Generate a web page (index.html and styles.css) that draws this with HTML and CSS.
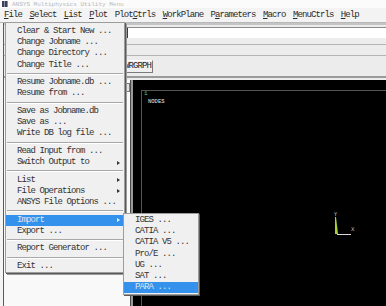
FILE: index.html
```html
<!DOCTYPE html>
<html lang="en">
<head>
    <meta charset="UTF-8">
    <title>ANSYS Multiphysics Utility Menu</title>
    <link rel="stylesheet" href="styles.css">
</head>
<body>
    <div class="app">
        <div class="titlebar">
            <span class="app-icon"></span>
            <span class="title-text">ANSYS Multiphysics Utility Menu</span>
        </div>

        <div class="menubar">
            <span class="mb-item"><u>F</u>ile</span>
            <span class="mb-item"><u>S</u>elect</span>
            <span class="mb-item"><u>L</u>ist</span>
            <span class="mb-item"><u>P</u>lot</span>
            <span class="mb-item">Plot<u>C</u>trls</span>
            <span class="mb-item"><u>W</u>orkPlane</span>
            <span class="mb-item">P<u>a</u>rameters</span>
            <span class="mb-item"><u>M</u>acro</span>
            <span class="mb-item"><u>M</u>enuCtrls</span>
            <span class="mb-item"><u>H</u>elp</span>
        </div>

        <div class="workspace">
            <div class="toolbar">
                <div class="cmd-row"><div class="cmd-input"></div></div>
                <div class="tool-row"></div>
                <div class="btn-row"><span class="tb-btn">POWRGRPH</span></div>
            </div>

            <div class="main">
                <div class="side">
                    <span class="side-btn"></span>
                </div>
                <div class="gfx">
                    <div class="gfx-frame">
                        <div class="win-no">1</div>
                        <div class="gfx-label">NODES</div>
                    </div>
                    <svg class="triad" width="26" height="30" viewBox="0 0 26 30">
                        <text x="4" y="8" class="axis-text">Y</text>
                        <polygon points="5,9 6,9 8,26 5,26" fill="#a8d23a"/>
                        <line x1="7" y1="26.5" x2="21" y2="26.5" stroke="#d8d8d8" stroke-width="1"/>
                        <text x="21" y="23" class="axis-text">X</text>
                    </svg>
                </div>
            </div>
        </div>

        <!-- File dropdown -->
        <div class="dropdown">
            <div class="dd-item">Clear &amp; Start New ...</div>
            <div class="dd-item">Change Jobname ...</div>
            <div class="dd-item">Change Directory ...</div>
            <div class="dd-item">Change Title ...</div>
            <div class="dd-sep"></div>
            <div class="dd-item">Resume Jobname.db ...</div>
            <div class="dd-item">Resume from ...</div>
            <div class="dd-sep"></div>
            <div class="dd-item">Save as Jobname.db</div>
            <div class="dd-item">Save as ...</div>
            <div class="dd-item">Write DB log file ...</div>
            <div class="dd-sep"></div>
            <div class="dd-item">Read Input from ...</div>
            <div class="dd-item has-sub">Switch Output to</div>
            <div class="dd-sep"></div>
            <div class="dd-item has-sub">List</div>
            <div class="dd-item has-sub">File Operations</div>
            <div class="dd-item">ANSYS File Options ...</div>
            <div class="dd-sep"></div>
            <div class="dd-item has-sub active">Import
                <div class="submenu">
                    <div class="sub-item">IGES ...</div>
                    <div class="sub-item">CATIA ...</div>
                    <div class="sub-item">CATIA V5 ...</div>
                    <div class="sub-item">Pro/E ...</div>
                    <div class="sub-item">UG ...</div>
                    <div class="sub-item">SAT ...</div>
                    <div class="sub-item active">PARA ...</div>
                </div>
            </div>
            <div class="dd-item">Export ...</div>
            <div class="dd-sep"></div>
            <div class="dd-item">Report Generator ...</div>
            <div class="dd-sep"></div>
            <div class="dd-item">Exit ...</div>
        </div>
    </div>
</body>
</html>
```

FILE: styles.css
```css
body {
    margin: 0;
    width: 386px;
    height: 306px;
    overflow: hidden;
    background: #f4f4f4;
    font-family: "Liberation Mono", "Courier New", monospace;
    font-size: 9px;
    letter-spacing: -0.9px;
    color: #333;
}
.app {
    position: relative;
    width: 386px;
    height: 306px;
}
.titlebar {
    height: 8px;
    display: flex;
    align-items: center;
    overflow: hidden;
    background: #fbfbfb;
}
.app-icon {
    width: 6px;
    height: 6px;
    margin: 0 4px 0 2px;
    background: repeating-linear-gradient(90deg, #3a3f5a 0 2px, #8a8fa5 2px 3px);
}
.title-text {
    color: #b8b8b8;
    font-size: 6px;
    line-height: 7px;
    letter-spacing: 0;
}
.menubar {
    height: 14px;
    display: flex;
    align-items: center;
    padding-left: 4px;
    background: #f3f3f3;
    border-bottom: 1px solid #b8b8b8;
}
.mb-item {
    margin-right: 7.4px;
    color: #2a2a2a;
}
.workspace {
    margin-left: 3px;
    border-left: 1px solid #5a5a5a;
}
.toolbar {
    background: #ececec;
}
.cmd-row {
    height: 19px;
    border-top: 2px solid #c4c4c4;
}
.cmd-input {
    margin: 2px 0 0 122px;
    height: 10px;
    background: #fff;
    border-left: 2px solid #3c3c3c;
    border-top: 1px solid #8a8a8a;
}
.tool-row {
    height: 10px;
    border-top: 1px solid #b4b4b4;
}
.btn-row {
    height: 23px;
    border-top: 1px solid #b4b4b4;
    border-bottom: 2px solid #9a9a9a;
    padding-top: 4px;
    box-sizing: border-box;
    display: flex;
}
.tb-btn {
    margin-left: 109px;
    height: 11px;
    line-height: 11px;
    padding: 0 1px;
    border: 1px solid #7a7a7a;
    border-top-color: #fff;
    border-left-color: #fff;
    background: #efefef;
    color: #222;
}
.main {
    display: flex;
    height: 226px;
    padding-top: 2px;
    background: #ececec;
}
.side {
    width: 126px;
    background: #f9f9f9;
    border-right: 1px solid #4a4a4a;
    display: flex;
    justify-content: flex-end;
}
.side-btn {
    width: 5px;
    height: 7px;
    margin-top: 3px;
    border: 1px solid #777;
    background: #e4e4e4;
}
.gfx {
    position: relative;
    flex: 1;
    background: #000;
    border-left: 2px solid #9a9a9a;
    overflow: hidden;
}
.gfx-frame {
    margin: 10px 0 0 8px;
    height: 400px;
    border-left: 1px solid #555;
    border-top: 1px solid #555;
    letter-spacing: 0;
}
.win-no {
    color: #4cc0a8;
    font-size: 6px;
    line-height: 6px;
    padding-left: 2px;
}
.gfx-label {
    color: #e8e8e8;
    font-size: 5.5px;
    line-height: 6px;
    margin: 2px 0 0 6px;
}
.triad {
    position: absolute;
    left: 197px;
    top: 128px;
}
.axis-text {
    font-family: "DejaVu Sans", sans-serif;
    font-size: 5px;
    fill: #c8c8c8;
}
.dropdown {
    position: absolute;
    left: 5px;
    top: 22px;
    width: 118px;
    padding: 3px 0 0;
    background: #f0f0f0;
    border: 1px solid #9c9c9c;
    box-shadow: 1px 1px 0 #5a5a5a, 2px 2px 0 #9a9a9a;
}
.dd-item {
    position: relative;
    height: 11.2px;
    line-height: 11.2px;
    padding-left: 11px;
    white-space: nowrap;
}
.has-sub::after {
    content: "";
    position: absolute;
    right: 4px;
    top: 3.5px;
    border-left: 3px solid #333;
    border-top: 2px solid transparent;
    border-bottom: 2px solid transparent;
}
.dd-sep {
    margin: 2.2px 1px;
    border-top: 1px solid #a8a8a8;
    border-bottom: 1px solid #fff;
}
.dd-item.active {
    background: #3592ec;
    color: #dce6f4;
}
.dd-item.active::after {
    border-left-color: #e8f0ff;
}
.submenu {
    position: absolute;
    left: calc(100% - 1px);
    top: -1.5px;
    width: 74px;
    padding: 1px 0;
    background: #f0f0f0;
    border: 1px solid #9c9c9c;
    box-shadow: 1px 1px 0 #5a5a5a;
    color: #333;
}
.sub-item {
    height: 11.2px;
    line-height: 11.2px;
    padding-left: 11px;
}
.sub-item.active {
    background: #3592ec;
    color: #dce6f4;
}
```
